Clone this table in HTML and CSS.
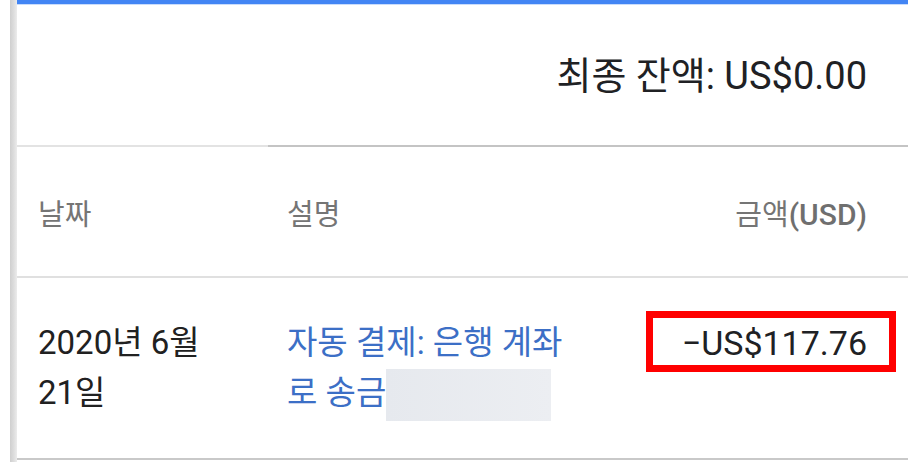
FILE: index.html
```html
<!DOCTYPE html>
<html lang="ko">
<head>
<meta charset="utf-8">
<link rel="stylesheet" href="styles.css">
</head>
<body>
<div class="page">
  <div class="card">
    <div class="topbar"></div>
    <div class="summary">최종 잔액: US$0.00</div>
    <div class="rule rule-top"></div>
    <div class="row head">
      <div class="col-date">날짜</div>
      <div class="col-desc">설명</div>
      <div class="col-amt">금액<span class="unit">(USD)</span></div>
    </div>
    <div class="rule"></div>
    <div class="row data">
      <div class="col-date">2020년 6월 21일</div>
      <div class="col-desc"><span class="link">자동 결제: 은행 계좌 로 송금</span><span class="blur"></span></div>
      <div class="col-amt"><span class="amount">−US$117.76</span></div>
    </div>
    <div class="rule rule-bottom"></div>
  </div>
</div>
</body>
</html>
```

FILE: styles.css
```css
html, body {
  margin: 0;
  padding: 0;
  background: #fff;
}
body {
  font-family: Roboto, "Noto Sans CJK KR", "Noto Sans", sans-serif;
  color: #212121;
  width: 908px;
  height: 462px;
  overflow: hidden;
}
.page {
  margin-left: 10px;
  padding-left: 7px;
  background: linear-gradient(to right, #cfcfcf 0, #dedede 4px, #ececec 7px, #fff 7px);
  height: 462px;
}
.card {
  background: #fff;
}
.topbar {
  height: 4px;
  background: #4285f4;
  border-bottom: 1px solid #c9dcfb;
}
.summary {
  height: 140px;
  display: flex;
  align-items: center;
  justify-content: flex-end;
  padding-right: 41px;
  font-size: 38px;
  color: #202124;
  box-sizing: border-box;
  padding-bottom: 6px;
}
.rule {
  height: 2px;
  background: #e0e0e0;
}
.rule-top {
  background: linear-gradient(to right, #e3e3e3 251px, #c4c4c4 251px);
}
.rule-bottom {
  background: #c9c9c9;
}
.row {
  display: grid;
  grid-template-columns: 249px 300px 1fr;
  padding-left: 21px;
  padding-right: 41px;
  box-sizing: border-box;
}
.head {
  height: 129px;
  align-items: center;
  color: #757575;
  font-size: 29px;
}
.unit {
  font-size: 30px;
  font-weight: 500;
  color: #6f6f6f;
}
.data {
  height: 180px;
  padding-top: 40px;
  align-items: start;
  line-height: 50px;
  font-size: 33px;
  word-break: keep-all;
}
.data .col-date {
  width: 200px;
}
.data .col-desc {
  width: 285px;
  font-size: 33px;
}
.col-amt {
  text-align: right;
}
.link {
  color: #3c6fc6;
}
.blur {
  display: inline-block;
  width: 165px;
  height: 52px;
  vertical-align: middle;
  background: linear-gradient(to right, #e6e9ee, #eceef2);
}
.amount {
  position: relative;
  display: inline-block;
  color: #202124;
  font-size: 34px;
}
.amount::after {
  content: "";
  position: absolute;
  left: -36px;
  right: -29px;
  top: -7px;
  bottom: -4px;
  border: 7px solid #f00;
  box-sizing: border-box;
}
```
